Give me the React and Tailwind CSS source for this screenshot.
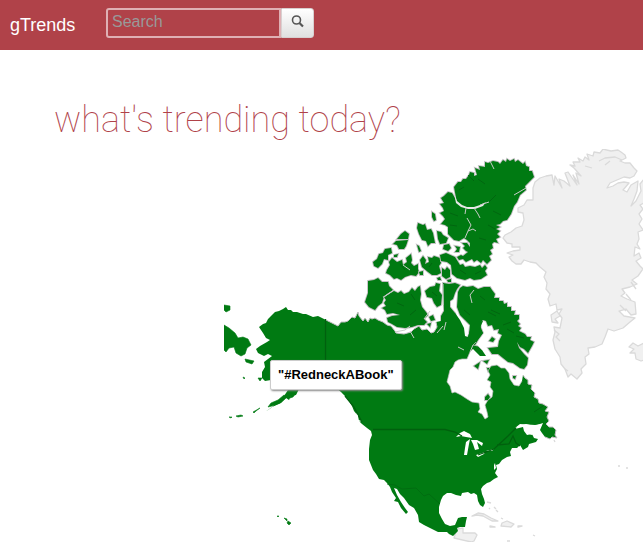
import React from "react";

const MAINLAND =
  "M259 327 L263 324 266 323 268 319 271 316 275 312 279 311 283 309 286 307 288 310 291 310 293 312 297 312 303 314 306 314 313 317 318 316 322 318 326 320 332 323 338 326 341 322 345 322 348 321 352 317 355 318 358 312 359 316 363 321 365 318 368 322 370 318 372 319 375 318 378 320 383 322 387 325 391 326 395 331 396 333 404 334 411 332 414 329 419 326 422 330 427 329 431 333 434 332 437 327 436 322 441 321 443 316 449 313 455 313 460 320 464 328 465 336 468 337 470 330 476 322 483 321 480 328 483 333 476 342 473 345 478 346 482 350 486 356 480 356 473 349 470 352 467 359 462 359 458 360 455 362 453 367 450 370 447 382 450 386 452 393 455 392 461 395 467 399 472 402 479 403 480 409 478 412 482 414 485 419 488 417 487 412 485 405 488 400 492 397 493 391 490 387 491 382 487 380 490 375 488 371 491 366 497 365 501 368 505 368 509 373 510 379 514 385 519 386 522 381 523 375 525 378 528 380 528 384 532 385 531 389 535 393 534 397 538 399 539 403 543 404 548 407 545 411 549 412 547 417 549 421 546 424 549 427 553 427 556 430 555 435 557 438 552 437 550 439 545 437 542 433 540 430 543 423 537 425 530 425 526 424 518 426 515 429 523 427 524 431 527 435 532 434 534 438 538 439 536 442 529 444 528 447 523 450 520 445 517 448 512 448 510 452 511 456 507 457 502 460 499 464 496 465 497 469 495 473 498 477 494 479 490 482 487 483 483 486 481 489 482 494 484 499 485 503 483 507 480 505 478 501 477 495 474 493 471 494 468 492 462 493 461 496 456 495 451 493 447 493 443 496 441 500 439 507 439 513 442 519 445 524 450 526 455 525 458 518 462 517 467 517 466 521 465 527 460 527 457 528 458 531 453 536 449 534 447 532 443 532 438 532 430 528 424 525 419 522 418 515 414 508 409 505 404 498 400 494 397 489 394 488 397 495 401 502 405 508 408 512 406 514 401 508 398 502 394 501 396 498 392 492 390 487 387 483 384 480 379 479 376 474 373 470 371 465 369 460 369 449 370 440 372 435 371 431 367 428 362 424 359 421 358 416 354 411 352 406 347 398 341 392 333 385 320 386 307 383 299 389 296 395 291 396 289 400 286 398 281 403 272 407 265 412 271 408 277 402 284 396 288 390 280 384 271 380 265 381 262 378 262 372 265 367 264 362 272 356 268 354 264 356 258 353 256 349 260 346 267 342 270 340 266 338 263 333 Z";

const ISLANDS = [
  "M454 187 L458 182 461 182 463 179 466 179 469 175 470 172 474 173 474 176 477 175 475 168 480 170 479 166 485 167 485 162 488 163 493 161 498 162 500 164 503 160 506 162 507 159 510 161 514 159 515 162 518 160 523 164 525 162 526 166 529 167 529 171 532 171 534 177 530 181 525 186 526 190 520 195 517 202 514 206 511 214 507 220 503 221 500 224 496 225 500 227 496 229 500 231 497 234 500 237 496 239 498 243 494 242 492 244 493 248 490 250 492 254 489 256 491 260 487 264 483 260 481 263 477 260 474 262 472 259 466 262 463 259 459 260 457 257 461 255 463 256 468 252 466 251 463 248 465 246 462 243 467 243 470 247 470 243 467 240 464 238 459 241 454 240 450 236 448 234 448 227 445 225 441 224 445 219 443 216 440 213 444 211 443 208 440 204 444 203 441 198 444 196 448 192 452 193 455 198 457 203Z",
  "M418 223 L423 225 425 224 427 230 431 229 433 233 435 243 431 243 428 246 426 241 422 240 419 234 417 228Z",
  "M437 231 L441 232 443 235 448 238 446 243 440 244 438 239Z",
  "M432 212 L435 214 436 220 434 221 432 217Z",
  "M397 239 L401 234 405 231 409 234 408 239 402 239Z M396 241 L408 240 406 246 404 249 399 249 397 245 393 244Z",
  "M373 262 L377 259 379 254 383 253 385 249 391 248 392 253 388 255 388 260 384 259 382 264 378 268 374 266Z",
  "M394 255 L398 254 397 257 394 257Z",
  "M387 270 L390 265 389 262 392 258 397 262 402 260 403 265 407 262 406 258 411 254 412 260 411 263 414 266 418 264 418 269 419 272 416 276 411 275 405 277 401 280 397 278 394 279 390 275 386 273Z",
  "M420 260 L423 256 426 260 425 264 429 262 428 257 432 258 434 256 440 258 441 263 439 266 441 273 437 275 432 275 428 272 422 267Z",
  "M417 245 L419 246 421 251 419 252 Z M444 245 L449 244 451 248 448 251 443 249Z M455 246 L460 247 459 252 455 252 457 249Z",
  "M442 268 L445 270 447 267 450 270 450 277 446 279 442 276Z M419 272 L423 271 423 275 420 275Z M437 278 L440 277 441 280 438 280Z M447 280 L451 279 451 282 448 282Z",
  "M440 255 L446 253 455 257 460 265 463 264 465 267 470 266 475 267 480 265 482 268 485 265 487 268 485 271 487 275 481 279 474 280 470 278 465 280 457 278 452 274 451 265 447 262 441 261Z",
  "M368 281 L374 280 378 278 382 282 388 282 389 286 393 290 387 294 384 297 382 303 378 306 375 310 369 307 365 302 368 293Z",
  "M394 291 L398 293 401 291 404 294 409 292 412 288 415 291 418 287 420 286 421 294 420 300 422 307 426 312 428 315 424 319 427 322 424 325 418 325 412 327 405 328 397 327 392 324 388 322 387 318 392 316 400 315 393 313 387 314 385 310 382 308 386 306 384 303 386 300 384 297Z",
  "M425 291 L430 287 435 286 436 283 440 284 439 291 442 295 441 305 437 307 434 303 432 298 427 297Z",
  "M443 283 L449 284 455 283 460 285 457 289 455 293 453 299 450 301 450 307 455 313 458 321 452 324 441 323 441 316 444 311Z",
  "M429 317 L433 315 435 320 431 321Z M427 324 L431 323 430 327Z",
  "M458 292 L460 288 463 286 467 287 473 286 478 289 484 287 490 287 492 290 495 294 494 298 499 298 499 301 503 301 504 304 507 303 507 307 511 307 511 311 515 311 514 315 519 315 519 319 517 321 520 324 518 326 521 328 519 331 525 334 527 337 531 337 530 340 534 342 532 346 528 353 524 349 520 347 517 342 519 348 524 354 528 358 527 365 524 369 520 368 513 363 508 362 503 358 498 354 492 354 488 348 498 347 499 341 502 335 498 333 499 329 494 330 492 325 488 326 486 321 483 320 480 323 481 328 483 333 478 340 475 345 470 348 467 340 469 334 470 325 465 320 460 315 457 307Z",
  "M489 341 L492 337 495 339 493 342Z M474 366 L480 362 478 369Z M483 361 L489 360 487 364Z M487 368 L490 368 488 371Z M485 397 L488 394 490 397 488 400 485 400Z M513 376 L516 376 515 379 513 378Z",
];

const ALEUTIANS = [
  "M224 325 L229 328 235 333 238 338 243 337 248 339 251 345 247 348 245 354 241 356 236 353 234 347 229 348 226 352 224 350Z",
  "M224 305 L230 306 230 310 226 312 224 310Z",
  "M245 359 L254 361 252 364 246 362Z",
  "M291 394 L296 393 293 397 290 398Z M268 407 L271 403 278 400 284 395 287 397 280 403 272 406Z",
  "M253 412 L260 408 256 411 254 413Z M236 416 L241 415 243 416 238 417Z M229 417 L232 417 231 418Z",
  "M243 377 L245 378 244 379Z M258 378 L262 378 260 381Z",
  "M277 516 L279 516 278 517Z M284 518 L287 519 287 521Z M288 521 L291 523 289 525 287 523Z",
];

const GREENLAND =
  "M533 188 L535 182 540 178 546 176 552 175 554 185 555 176 562 188 559 179 564 181 570 186 565 173 568 172 577 185 573 175 579 184 576 173 581 176 574 168 570 165 575 166 573 162 580 162 578 158 583 161 585 157 589 160 587 154 593 156 594 152 600 153 603 149 611 151 618 150 621 152 625 155 626 158 620 161 625 163 630 163 634 168 637 171 634 176 630 178 624 177 617 180 610 183 607 188 613 186 618 183 624 182 629 183 623 190 627 192 631 185 638 181 637 191 634 199 631 206 636 201 641 191 640 184 644 179 L644 203 640 205 643 209 639 214 642 219 639 224 643 230 638 232 639 239 637 244 640 249 635 247 634 256 639 253 641 258 636 261 640 266 643 269 638 276 632 280 637 284 630 287 622 289 625 293 621 296 627 299 635 302 636 314 631 315 626 309 619 311 624 316 635 318 630 322 623 328 614 331 608 329 605 337 602 344 595 347 588 348 589 354 585 357 586 364 581 369 582 373 577 379 571 374 568 377 565 369 561 364 560 357 555 349 553 340 555 332 554 327 560 328 562 318 559 314 562 309 557 310 556 304 550 306 548 299 550 294 546 289 547 283 544 277 546 272 540 267 536 263 530 262 524 260 521 264 516 264 512 261 509 257 513 255 507 253 513 251 520 250 520 247 512 247 512 244 507 243 503 238 505 235 511 232 516 228 522 226 524 220 523 213 518 212 518 208 524 205 527 200 533 200Z";

const PALE = [
  "M551 315 L557 311 560 316 555 319 558 323 552 322Z",
  "M644 343 L638 346 633 343 629 347 634 349 630 353 635 353 636 359 641 361 644 360Z",
  "M457 529 L463 528 463 533 468 533 475 533 477 535 474 541 471 542 454 538Z",
  "M472 516 L478 513 484 514 491 518 498 521 492 521 483 516 477 515Z",
  "M502 523 L507 521 514 524 511 527 501 526Z M490 526 L495 527 490 527Z M518 526 L522 526 518 527Z",
  "M487 502 L491 503 M490 508 L489 509 M494 507 L496 509 M496 510 L498 512 M501 518 L503 519",
  "M618 466 L620 466 M626 468 L628 468 M507 541 L510 541 M533 535 L535 536 M565 369 L568 371 M554 440 L555 442",
];

const LAKES = [
  "M456 437 L460 433 464 431 470 434 472 438 466 437 461 436Z",
  "M466 442 L470 439 469 444 467 455 464 455 465 448Z",
  "M471 440 L477 440 483 443 482 446 477 442 479 449 475 450 473 444Z",
  "M476 455 L485 452 484 454 478 457Z M486 451 L494 449 492 451Z",
  "M515 428 L522 426 530 428 526 433 532 435 538 430 542 424 535 425 520 424Z",
  "M345 403 L348 400 350 404 347 406 351 410 350 415 346 411Z M355 419 L362 421 358 422Z M356 413 L359 416 357 416Z",
  "M494 465 L495 463 496 468 494 470Z",
];

const SOUND = "M454 193 L457 201 462 205 467 207 474 207 480 205 486 202 483 206 475 209 468 209 461 207 456 203Z";

const FJORDS =
  "M480 205 L489 202 M474 208 L478 214 480 218 M466 208 L465 214 M467 218 L471 225 468 231 473 229 476 231 M468 231 L465 238 M514 195 L526 188 M490 161 L494 169 M384 297 L394 290 M424 319 L430 311 M395 332 L405 330 410 326 M410 331 L414 338 M437 333 L443 326 M473 345 L470 352 M458 347 L464 350 M403 265 L410 270 M443 284 L443 305 M474 290 L470 295 472 303 M446 322 L444 330";

const BORDERS =
  "M325.500 319 L325.500 370 M373 429.500 L445 429.500 455 432 462 436 M478 455 L494 449 508 436 516 428 M497 445 L509 444 513 436 516 443 520 446 M362 422 L354 407 345 396";

const MEXICO_BORDER = "M387 484 L395 485 402 489 416 488 424 496 429 494 440 504";

const COAST_MARKS =
  "M464 187 L459 190 M485 184 L478 179 M496 195 L489 202 M501 215 L493 211 M488 225 L495 229 M479 238 L486 240 M458 216 L450 213 M457 226 L450 225 M397 303 L404 306 M410 315 L416 310 M470 315 L464 310 M485 300 L480 296 M500 314 L491 310 M514 333 L507 329 M524 338 L516 336 M400 264 L405 270 M432 263 L429 267 M460 270 L466 274 M475 274 L481 271 M534 412 L543 406 M468 175 L474 181 M415 300 L411 294 M432 292 L437 296 M488 312 L496 316 M503 325 L511 322";

const COAST_EDGE =
  "M326 320 L332 323 338 326 341 322 345 322 348 321 352 317 355 318 358 312 359 316 363 321 365 318 368 322 370 318 372 319 375 318 378 320 383 322 387 325 391 326 395 331 396 333 404 334 411 332 414 329 419 326 422 330 427 329 431 333 434 332 437 327 436 322 M523 375 L525 378 528 380 528 384 532 385 531 389 535 393 534 397 538 399 539 403 543 404 548 407 545 411 549 412 547 417 549 421 546 424 549 427 553 427 556 430 555 435 557 438 552 437 550 439 545 437";

const HUDSON_EDGE =
  "M476 342 L473 345 478 346 482 350 M473 349 L470 352 467 359 462 359 458 360 455 362 453 367 450 370 447 382 450 386 452 393 455 392 461 395 467 399 472 402 479 403 480 409 478 412 482 414 485 419 488 417 487 412 485 405 488 400 492 397 493 391 490 387 491 382 487 380 490 375 488 371 491 366 497 365 501 368 505 368 509 373 510 379 514 385 519 386 522 381";

function TrendMap() {
  return (
    <svg
      viewBox="224 149 419 393"
      className="block w-full"
      role="img"
      aria-label="Trends by country"
    >
      <g fill="#f0f0f0" stroke="#dadada" strokeWidth="1.300" strokeLinejoin="round">
        <path d={GREENLAND} />
        {PALE.map((d) => (
          <path key={d} d={d} />
        ))}
        <path
          fill="none"
          d="M599 161 L605 158 615 157 622 160 M605 165 L610 161 M585 166 L592 168 M631 282 L636 289 M626 294 L631 300 M554 330 L559 334 556 337 560 341 M620 305 L626 311"
        />
      </g>
      <g fill="#007a12" stroke="#c4c0c4" strokeWidth="1.800" strokeLinejoin="miter" paintOrder="stroke">
        {ISLANDS.map((d) => (
          <path key={d} d={d} />
        ))}
      </g>
      <path d={MAINLAND} fill="#007a12" />
      <g fill="none" stroke="#c4c0c4">
        <path d={COAST_EDGE} strokeWidth="1" />
        <path d={HUDSON_EDGE} strokeWidth="0.700" />
      </g>
      {ALEUTIANS.map((d) => (
        <path key={d} d={d} fill="#007a12" stroke="#007a12" strokeWidth="0.600" />
      ))}
      {LAKES.map((d) => (
        <path key={d} d={d} fill="#ffffff" />
      ))}
      <path d={SOUND} fill="#e8e8e8" />
      <path d={FJORDS} fill="none" stroke="#c8ccc8" strokeWidth="1" />
      <path d={COAST_MARKS} fill="none" stroke="#006410" strokeWidth="0.900" />
      <path d={BORDERS} fill="none" stroke="#00600e" strokeWidth="1.300" />
      <path d={MEXICO_BORDER} fill="none" stroke="#006a10" strokeWidth="0.800" />
    </svg>
  );
}

export default function App() {
  return (
    <div className="bg-white font-['Liberation_Sans',Arial,sans-serif] text-black">
      <header className="flex h-[50px] items-start bg-[#b04249] pt-2">
        <a
          href="#"
          className="ml-[10px] w-24 shrink-0 pt-1 text-lg leading-[26px] text-white"
        >
          gTrends
        </a>
        <form className="flex" role="search" onSubmit={(e) => e.preventDefault()}>
          <input
            type="text"
            aria-label="Search"
            placeholder="Search"
            className="h-[30px] w-[175px] rounded-l-[3px] border-2 border-[#dfb0b4] bg-transparent px-1 pb-[2px] text-base leading-5 text-white outline-none placeholder:text-[#999999] placeholder:opacity-100"
          />
          <button
            type="submit"
            aria-label="Submit search"
            className="flex h-[30px] w-[33px] items-center justify-center rounded-r-[3px] border border-[#d8d0d0] bg-linear-to-b from-white to-[#e0e0e0]"
          >
            <svg viewBox="0 0 14 14" className="mb-1 size-3.5" fill="none" stroke="#555555">
              <circle cx="5.500" cy="6" r="4" strokeWidth="1.600" />
              <path d="M8.500 9 L12 12.500" strokeWidth="2.200" />
            </svg>
          </button>
        </form>
      </header>
      <main>
        <h1 className="pt-[46px] pl-[54px] font-[Roboto,sans-serif] text-4xl leading-[48px] font-thin text-[#b04249]">
          what's trending today?
        </h1>
        <div className="relative mt-[5px] ml-56">
          <TrendMap />
          <div
            role="tooltip"
            className="absolute top-[211px] left-[46px] rounded-[2px] border border-[#cccccc] bg-white px-[7px] py-[5px] text-[13px] leading-[18px] font-bold whitespace-nowrap shadow-[1px_1px_2px_#888888]"
          >
            "#RedneckABook"
          </div>
        </div>
      </main>
    </div>
  );
}
